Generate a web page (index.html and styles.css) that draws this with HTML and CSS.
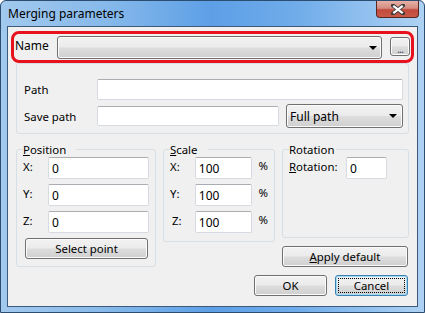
FILE: index.html
```html
<!DOCTYPE html>
<html>

<head>
    <meta charset="utf-8">
    <title>Merging parameters</title>
    <link rel="stylesheet" href="styles.css">
</head>

<body>
    <div class="window">
        <div class="titlebar">
            <span class="title">Merging parameters</span>
            <span class="close">
                <svg width="14" height="11" viewBox="0 0 14 11">
                    <path d="M2 1.5 L12 9.5 M12 1.5 L2 9.5" stroke="#3b3b3b" stroke-width="4" stroke-linecap="round"/>
                    <path d="M2.3 1.8 L11.7 9.2 M11.7 1.8 L2.3 9.2" stroke="#ffffff" stroke-width="2.2"/>
                </svg>
            </span>
        </div>
        <div class="client">
            <div class="name-row">
                <label class="name-label">Name</label>
                <div class="combo name-combo"><i class="arrow"></i></div>
                <div class="btn dots">...</div>
            </div>

            <div class="group paths">
                <div class="row">
                    <label class="path-label">Path</label>
                    <div class="field path-field"></div>
                </div>
                <div class="row">
                    <label class="path-label">Save path</label>
                    <div class="field save-field"></div>
                    <div class="combo mode-combo">Full path<i class="arrow"></i></div>
                </div>
            </div>

            <div class="lower">
                <fieldset class="box position">
                    <legend class="legend-wide"><u>P</u>osition</legend>
                    <div class="coord"><label>X:</label><div class="field pos-field">0</div></div>
                    <div class="coord"><label>Y:</label><div class="field pos-field">0</div></div>
                    <div class="coord"><label>Z:</label><div class="field pos-field">0</div></div>
                    <div class="btn select">Select point</div>
                </fieldset>

                <fieldset class="box scale">
                    <legend class="legend-wide"><u>S</u>cale</legend>
                    <div class="coord"><label>X:</label><div class="field scale-field">100</div><span class="pct">%</span></div>
                    <div class="coord"><label>Y:</label><div class="field scale-field">100</div><span class="pct">%</span></div>
                    <div class="coord"><label class="z">Z:</label><div class="field scale-field">100</div><span class="pct">%</span></div>
                </fieldset>

                <div class="side">
                    <fieldset class="box rotation">
                        <legend>Rotation</legend>
                        <div class="coord"><label class="rot-label"><u>R</u>otation:</label><div class="field rot-field">0</div></div>
                    </fieldset>
                    <div class="btn apply"><u>A</u>pply default</div>
                </div>
            </div>

            <div class="actions">
                <div class="btn action">OK</div>
                <div class="btn action default">Cancel</div>
            </div>
        </div>
    </div>
</body>

</html>
```

FILE: styles.css
```css
body {
    margin: 0;
    font-family: 'Noto Sans', 'Open Sans', sans-serif;
    font-size: 11.4px;
    line-height: 15px;
    color: #000;
}
.window {
    width: 425px;
    height: 313px;
    box-sizing: border-box;
    border: 1px solid #2c4c70;
    border-radius: 6px 6px 0 0;
    padding: 0 6px 5px 6px;
    background: linear-gradient(90deg, #a2c9ee 0%, #86b9ea 25%, #5d9fe6 50%, #70acea 70%, #aed2f3 100%);
}
.titlebar {
    height: 25px;
    display: flex;
    align-items: flex-start;
}
.title {
    padding: 5px 0 0 1px;
    font-size: 12px;
}
.close {
    margin-left: auto;
    margin-right: -1px;
    width: 41px;
    height: 16px;
    border: 1px solid #5a2620;
    border-top: none;
    border-radius: 0 0 4px 4px;
    background: linear-gradient(#e6b0a6 0%, #d48e82 45%, #c24a3c 55%, #c85a48 100%);
    display: flex;
    align-items: center;
    justify-content: center;
}
.client {
    height: 281px;
    box-sizing: border-box;
    border: 1px solid #3d5a7a;
    background: #f0f0f0;
}
.name-row {
    margin: 4px 3px 0 3px;
    height: 32px;
    box-sizing: border-box;
    border: 3px solid #e8121e;
    border-radius: 8px;
    padding: 2px 0 0 1px;
    display: flex;
    align-items: flex-start;
}
.name-label {
    width: 42px;
    padding-top: 2px;
    font-size: 12px;
}
.btn, .combo {
    box-sizing: border-box;
    border: 1px solid #707070;
    border-radius: 3px;
    background: linear-gradient(#f2f2f2 0%, #ebebeb 48%, #dddddd 52%, #cfcfcf 100%);
    box-shadow: inset 0 0 0 1px #fbfbfb;
}
.btn {
    display: flex;
    align-items: center;
    justify-content: center;
}
.combo {
    display: flex;
    align-items: center;
    padding-left: 3px;
}
.arrow {
    margin-left: auto;
    margin-right: 4px;
    width: 0;
    height: 0;
    border-left: 4px solid transparent;
    border-right: 4px solid transparent;
    border-top: 4px solid #000;
}
.name-combo {
    width: 325px;
    height: 23px;
}
.dots {
    width: 20px;
    height: 19px;
    margin: 1px 0 0 8px;
    padding-top: 3px;
    letter-spacing: -1px;
    color: #4a4a70;
}
.group {
    margin: 0 8px;
    border: 1px solid #d5dfe5;
    border-radius: 3px;
}
.paths {
    height: 71px;
    box-sizing: border-box;
    padding: 15px 5px 0 7px;
    display: flex;
    flex-direction: column;
    gap: 4px;
}
.row {
    display: flex;
    align-items: center;
}
.path-label {
    width: 73px;
}
.field {
    box-sizing: border-box;
    height: 21px;
    background: #fff;
    border: 1px solid #d6dbe2;
    border-top-color: #abadb3;
    border-radius: 2px;
    padding-left: 3px;
    display: flex;
    align-items: center;
    font-size: 12px;
}
.path-field {
    width: 306px;
}
.save-field {
    width: 182px;
    height: 20px;
    margin-right: 7px;
}
.mode-combo {
    width: 117px;
    height: 24px;
    font-size: 12px;
}
.mode-combo .arrow {
    margin-right: 5px;
}
.lower {
    margin: 8px 8px 0 8px;
    display: grid;
    grid-template-columns: 140px 112px 127px;
    column-gap: 7px;
    align-items: start;
}
.box {
    margin: 0;
    min-width: 0;
    border: 1px solid #d5dfe5;
    border-radius: 3px;
    padding: 0 6px 7px 6px;
}
.box legend {
    padding: 0 2px 0 0;
}
.legend-wide {
    padding-right: 10px !important;
}
.coord {
    display: flex;
    align-items: flex-start;
    margin-bottom: 5px;
}
.coord label {
    width: 25px;
    padding-top: 2px;
}
.coord .z {
    padding-left: 2px;
    width: 23px;
}
.coord .field {
    height: 22px;
}
.pos-field {
    width: 101px;
}
.select {
    width: 123px;
    height: 21px;
    margin: 1px 0 0 2px;
}
.scale {
    padding-bottom: 3px;
}
.scale-field {
    width: 57px;
}
.pct {
    margin-left: 7px;
    padding-top: 1px;
}
.side {
    display: flex;
    flex-direction: column;
}
.rotation {
    height: 96px;
    box-sizing: border-box;
}
.rot-label {
    width: 57px !important;
}
.rot-field {
    width: 41px;
}
.apply {
    width: 126px;
    height: 21px;
    margin-top: 8px;
}
.actions {
    margin: 8px 9px 0 0;
    display: flex;
    justify-content: flex-end;
    gap: 8px;
}
.action {
    width: 73px;
    height: 21px;
}
.default {
    border-color: #3c7fb1;
    box-shadow: inset 0 0 0 1px #9fdcf6;
    outline: 1px dotted #000;
    outline-offset: -4px;
}
```
